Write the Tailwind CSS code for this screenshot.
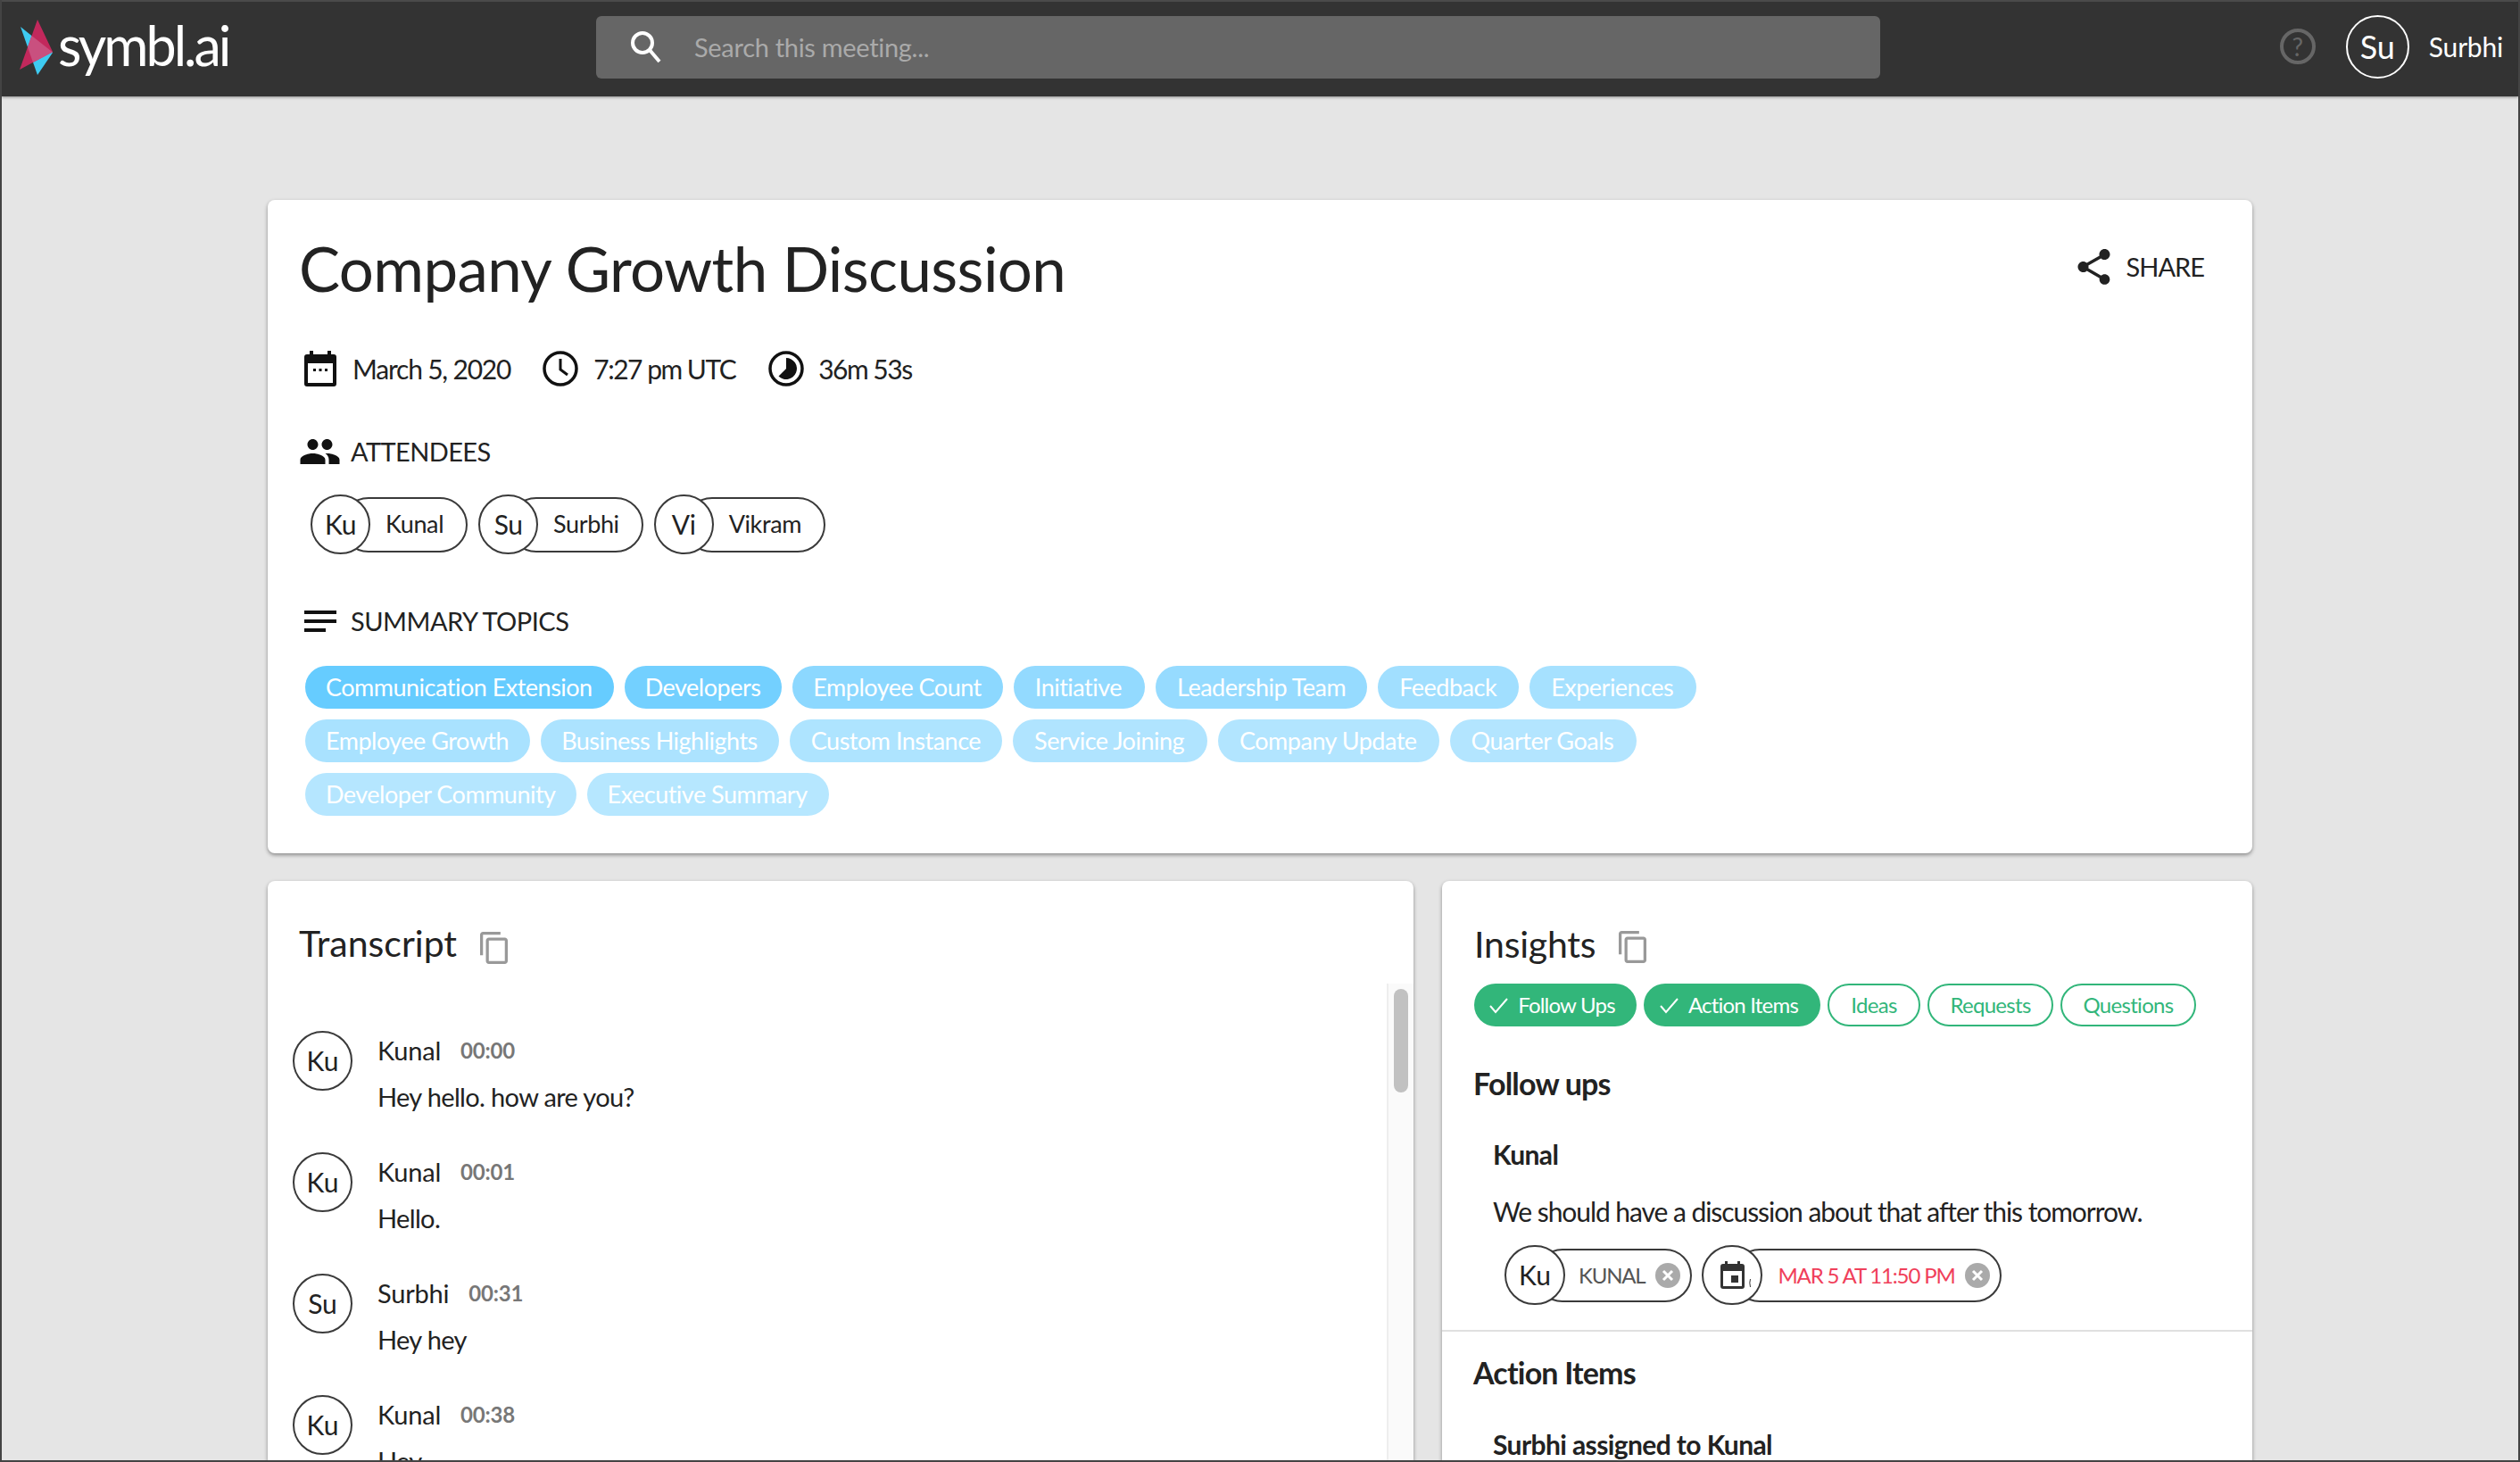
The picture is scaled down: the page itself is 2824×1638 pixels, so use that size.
<!DOCTYPE html>
<html lang="en">
<head>
  <meta charset="UTF-8">
  <title>symbl.ai - Company Growth Discussion</title>
  <script src="https://cdn.jsdelivr.net/npm/@tailwindcss/browser@4"></script>
</head>
<body class="font-[Lato,sans-serif] text-[#222] bg-[#e5e5e5]">
<div class="h-[1638px] w-[2824px] overflow-hidden flex flex-col border-x-2 border-b-2 border-[#444] relative">

  <!-- Header -->
  <header class="h-[108px] shrink-0 bg-[#333] border-t-2 border-[#4a4a4a] pb-[4px] flex items-center text-white shadow-[0_1px_3px_rgba(0,0,0,0.4)] relative z-10">
    <div class="w-[666px] shrink-0 flex items-center">
      <svg class="ml-[18px] mt-[2px] w-[44px] h-[66px]" viewBox="20 20 44 66">
        <polygon points="23,29 59,58 42,83" fill="#3ecbf2"/>
        <polygon points="42,21 59,57 22,77" fill="#c2285c"/>
        <polygon points="35.5,39 59,57.5 37,69 31,52" fill="#c9507f"/>
      </svg>
      <span class="ml-[1px] text-[61px] leading-none tracking-[-3px] -mt-[6px]">symbl.ai</span>
    </div>
    <div class="w-[1439px] h-[70px] bg-[#666] rounded-md flex items-center pl-[36px]">
      <svg class="w-[40px] h-[40px]" viewBox="0 0 40 40" fill="none" stroke="#fff">
        <circle cx="16" cy="15" r="11" stroke-width="4"/>
        <path d="M24 23l11 13" stroke-width="4"/>
      </svg>
      <span class="ml-[34px] text-[29px] tracking-[-0.3px] text-[#aaa]">Search this meeting...</span>
    </div>
    <div class="flex-1 flex items-center justify-end pr-[17px] -mt-[2px]">
      <div class="w-[40px] h-[40px] rounded-full border-[4px] border-[#666] text-[#666] text-[28px] flex items-center justify-center">?</div>
      <div class="ml-[34px] w-[71px] h-[71px] rounded-full border-2 border-white flex items-center justify-center text-[36px]">Su</div>
      <span class="ml-[22px] text-[30px] tracking-[-0.2px]">Surbhi</span>
    </div>
  </header>

  <main class="flex-1 pl-[298px] pt-[116px] min-h-0">
    <!-- Meeting card -->
    <section class="w-[2224px] h-[732px] bg-white rounded-lg shadow-[0_2px_4px_rgba(0,0,0,0.4)] px-[36px] pt-[46px]">
      <div class="h-[60px] flex items-center justify-between">
        <h1 class="-ml-[1px] text-[69px] leading-none font-normal tracking-[-0.6px]">Company Growth Discussion</h1>
        <div class="flex items-center mr-[18px] -mt-[2px]">
          <svg class="w-[37px] h-[40px]" viewBox="3 2 18 20" fill="#222"><path d="M18 16.08c-.76 0-1.44.3-1.96.77L8.91 12.7c.05-.23.09-.46.09-.7s-.04-.47-.09-.7l7.05-4.11c.54.5 1.25.81 2.04.81 1.66 0 3-1.34 3-3s-1.34-3-3-3-3 1.34-3 3c0 .24.04.47.09.7L8.04 9.81C7.5 9.31 6.79 9 6 9c-1.66 0-3 1.34-3 3s1.34 3 3 3c.79 0 1.5-.31 2.04-.81l7.12 4.16c-.05.21-.08.43-.08.65 0 1.61 1.31 2.92 2.92 2.92 1.61 0 2.92-1.31 2.92-2.92s-1.31-2.92-2.92-2.92z"/></svg>
          <span class="ml-[18px] text-[29px] tracking-[-1px]">SHARE</span>
        </div>
      </div>

      <div class="mt-[63px] h-[40px] flex items-center text-[30px] tracking-[-1.2px] pl-[5px]">
        <svg class="w-[36px] h-[40px]" viewBox="0 0 36 40">
          <rect x="6" y="0" width="4" height="8" fill="#111"/><rect x="26" y="0" width="4" height="8" fill="#111"/>
          <rect x="0" y="4" width="36" height="36" rx="3" fill="#111"/>
          <rect x="4" y="14" width="28" height="22" fill="#fff"/>
          <rect x="10" y="20" width="3" height="3" fill="#111"/><rect x="16.5" y="20" width="3" height="3" fill="#111"/><rect x="23" y="20" width="3" height="3" fill="#111"/>
        </svg>
        <span class="ml-[18px]">March 5, 2020</span>
        <svg class="ml-[36px] w-[40px] h-[40px]" viewBox="0 0 40 40" fill="none" stroke="#111">
          <circle cx="20" cy="20" r="18" stroke-width="3.5"/>
          <path d="M20 9v12l8 6" stroke-width="3"/>
        </svg>
        <span class="ml-[17px] tracking-[-1.5px]">7:27 pm UTC</span>
        <svg class="ml-[37px] w-[40px] h-[40px]" viewBox="0 0 40 40">
          <circle cx="20" cy="20" r="18" stroke-width="3.5" stroke="#111" fill="none"/>
          <path d="M20 8A12 12 0 1 1 11.5 28.5L20 20Z" fill="#111"/>
        </svg>
        <span class="ml-[16px] tracking-[-1.5px]">36m 53s</span>
      </div>

      <div class="mt-[58px] h-[30px] flex items-center text-[29px] tracking-[-0.6px]">
        <svg class="w-[45px] h-[28px]" viewBox="1 5 22 14" fill="#111"><path d="M16 11c1.66 0 2.99-1.34 2.99-3S17.66 5 16 5c-1.66 0-3 1.34-3 3s1.34 3 3 3zm-8 0c1.66 0 2.99-1.34 2.99-3S9.66 5 8 5C6.34 5 5 6.34 5 8s1.34 3 3 3zm0 2c-2.33 0-7 1.17-7 3.5V19h14v-2.5c0-2.33-4.67-3.5-7-3.5zm8 0c-.29 0-.62.02-.97.05 1.16.84 1.97 1.97 1.97 3.45V19h6v-2.5c0-2.33-4.67-3.5-7-3.5z"/></svg>
        <span class="ml-[12px]">ATTENDEES</span>
      </div>

      <div class="mt-[33px] flex items-center gap-[12px] pl-[12px] text-[27px] tracking-[-0.4px]">
        <div class="flex items-center">
          <div class="relative z-10 w-[67px] h-[67px] rounded-full border-2 border-[#3a3a3a] bg-white flex items-center justify-center text-[30px]">Ku</div>
          <div class="h-[62px] -ml-[33px] pl-[48px] pr-[25px] rounded-full border-2 border-[#3a3a3a] flex items-center">Kunal</div>
        </div>
        <div class="flex items-center">
          <div class="relative z-10 w-[67px] h-[67px] rounded-full border-2 border-[#3a3a3a] bg-white flex items-center justify-center text-[30px]">Su</div>
          <div class="h-[62px] -ml-[33px] pl-[48px] pr-[25px] rounded-full border-2 border-[#3a3a3a] flex items-center">Surbhi</div>
        </div>
        <div class="flex items-center">
          <div class="relative z-10 w-[67px] h-[67px] rounded-full border-2 border-[#3a3a3a] bg-white flex items-center justify-center text-[30px]">Vi</div>
          <div class="h-[62px] -ml-[33px] pl-[48px] pr-[25px] rounded-full border-2 border-[#3a3a3a] flex items-center">Vikram</div>
        </div>
      </div>

      <div class="mt-[63px] h-[24px] flex items-center text-[29px] tracking-[-0.5px] pl-[5px]">
        <svg class="w-[36px] h-[24px]" viewBox="0 0 36 24" fill="#111"><rect width="36" height="4"/><rect y="10" width="36" height="4"/><rect y="20" width="24" height="4"/></svg>
        <span class="ml-[16px]">SUMMARY TOPICS</span>
      </div>

      <div class="mt-[38px] pl-[6px] flex flex-wrap gap-[12px] w-[1640px] text-[27px] tracking-[-0.5px] text-white">
        <span class="h-[48px] pl-[23px] pr-[24px] rounded-full flex items-center bg-[#66ccff]">Communication Extension</span>
        <span class="h-[48px] pl-[23px] pr-[24px] rounded-full flex items-center bg-[#73d0ff]">Developers</span>
        <span class="h-[48px] pl-[23px] pr-[24px] rounded-full flex items-center bg-[#8cd8ff]">Employee Count</span>
        <span class="h-[48px] pl-[24px] pr-[26px] rounded-full flex items-center bg-[#93daff]">Initiative</span>
        <span class="h-[48px] pl-[24px] pr-[24px] rounded-full flex items-center bg-[#96dbff]">Leadership Team</span>
        <span class="h-[48px] pl-[24px] pr-[25px] rounded-full flex items-center bg-[#a1dfff]">Feedback</span>
        <span class="h-[48px] pl-[24px] pr-[26px] rounded-full flex items-center bg-[#a6e1ff]">Experiences</span>
        <span class="h-[48px] pl-[23px] pr-[24px] rounded-full flex items-center bg-[#a9e2ff]">Employee Growth</span>
        <span class="h-[48px] pl-[23px] pr-[24px] rounded-full flex items-center bg-[#ace3ff]">Business Highlights</span>
        <span class="h-[48px] pl-[24px] pr-[24px] rounded-full flex items-center bg-[#aee4ff]">Custom Instance</span>
        <span class="h-[48px] pl-[24px] pr-[26px] rounded-full flex items-center bg-[#b0e4ff]">Service Joining</span>
        <span class="h-[48px] pl-[24px] pr-[25px] rounded-full flex items-center bg-[#b2e5ff]">Company Update</span>
        <span class="h-[48px] pl-[24px] pr-[26px] rounded-full flex items-center bg-[#b3e5ff]">Quarter Goals</span>
        <span class="h-[48px] pl-[23px] pr-[23px] rounded-full flex items-center bg-[#b5e6ff]">Developer Community</span>
        <span class="h-[48px] pl-[23px] pr-[24px] rounded-full flex items-center bg-[#b6e7ff]">Executive Summary</span>
      </div>
    </section>

    <div class="mt-[31px] flex gap-[32px]">
      <!-- Transcript -->
      <section class="w-[1284px] h-[700px] bg-white rounded-t-lg shadow-[0_2px_4px_rgba(0,0,0,0.4)] relative overflow-hidden">
        <div class="pl-[35px] pt-[46px] h-[115px] flex items-start">
          <h2 class="text-[41px] leading-[48px] font-normal">Transcript</h2>
          <svg class="ml-[26px] mt-[11px] w-[31px] h-[36px]" viewBox="2 1 19 22" fill="#999"><path d="M16 1H4c-1.1 0-2 .9-2 2v14h2V3h12V1zm3 4H8c-1.1 0-2 .9-2 2v14c0 1.1.9 2 2 2h11c1.1 0 2-.9 2-2V7c0-1.1-.9-2-2-2zm0 16H8V7h11v14z"/></svg>
        </div>
        <div class="absolute right-0 top-[115px] bottom-0 w-[30px] bg-[#fafafa] border-l-2 border-[#eee]">
          <div class="ml-[6px] mt-[6px] w-[16px] h-[116px] rounded-full bg-[#c1c1c1]"></div>
        </div>
        <div class="pl-[28px] pt-[53px] flex flex-col gap-[69px]">
          <div class="flex h-[67px]">
            <div class="w-[67px] h-[67px] shrink-0 rounded-full border-2 border-[#3a3a3a] flex items-center justify-center text-[30px]">Ku</div>
            <div class="ml-[28px] pt-[4px]">
              <div class="flex items-center h-[36px] text-[29px] tracking-[-0.2px]">Kunal<span class="ml-[22px] text-[24px] font-bold tracking-[-0.2px] text-[#777]">00:00</span></div>
              <div class="mt-[16px] h-[36px] flex items-center text-[29px] tracking-[-0.65px]">Hey hello. how are you?</div>
            </div>
          </div>
          <div class="flex h-[67px]">
            <div class="w-[67px] h-[67px] shrink-0 rounded-full border-2 border-[#3a3a3a] flex items-center justify-center text-[30px]">Ku</div>
            <div class="ml-[28px] pt-[4px]">
              <div class="flex items-center h-[36px] text-[29px] tracking-[-0.2px]">Kunal<span class="ml-[22px] text-[24px] font-bold tracking-[-0.2px] text-[#777]">00:01</span></div>
              <div class="mt-[16px] h-[36px] flex items-center text-[29px] tracking-[-0.65px]">Hello.</div>
            </div>
          </div>
          <div class="flex h-[67px]">
            <div class="w-[67px] h-[67px] shrink-0 rounded-full border-2 border-[#3a3a3a] flex items-center justify-center text-[30px]">Su</div>
            <div class="ml-[28px] pt-[4px]">
              <div class="flex items-center h-[36px] text-[29px] tracking-[-0.2px]">Surbhi<span class="ml-[22px] text-[24px] font-bold tracking-[-0.2px] text-[#777]">00:31</span></div>
              <div class="mt-[16px] h-[36px] flex items-center text-[29px] tracking-[-0.65px]">Hey hey</div>
            </div>
          </div>
          <div class="flex h-[67px]">
            <div class="w-[67px] h-[67px] shrink-0 rounded-full border-2 border-[#3a3a3a] flex items-center justify-center text-[30px]">Ku</div>
            <div class="ml-[28px] pt-[4px]">
              <div class="flex items-center h-[36px] text-[29px] tracking-[-0.2px]">Kunal<span class="ml-[22px] text-[24px] font-bold tracking-[-0.2px] text-[#777]">00:38</span></div>
              <div class="mt-[16px] h-[36px] flex items-center text-[29px] tracking-[-0.65px]">Hey</div>
            </div>
          </div>
        </div>
      </section>

      <!-- Insights -->
      <section class="w-[908px] h-[700px] bg-white rounded-t-lg shadow-[0_2px_4px_rgba(0,0,0,0.4)] overflow-hidden">
        <div class="pl-[36px] pt-[47px] flex items-start h-[115px]">
          <h2 class="text-[41px] leading-[48px] font-normal tracking-[-0.2px]">Insights</h2>
          <svg class="ml-[26px] mt-[9px] w-[31px] h-[36px]" viewBox="2 1 19 22" fill="#999"><path d="M16 1H4c-1.1 0-2 .9-2 2v14h2V3h12V1zm3 4H8c-1.1 0-2 .9-2 2v14c0 1.1.9 2 2 2h11c1.1 0 2-.9 2-2V7c0-1.1-.9-2-2-2zm0 16H8V7h11v14z"/></svg>
        </div>
        <div class="pl-[36px] flex gap-[8px] text-[24px] tracking-[-0.7px]">
          <span class="h-[48px] w-[182px] pr-[7px] rounded-full bg-[#32b67a] text-white flex items-center justify-center tracking-[-0.8px]">
            <svg class="w-[21px] h-[21px] mr-[11px]" viewBox="0 0 21 21" fill="none" stroke="#fff" stroke-width="2"><path d="M1 11l6 7L20 3"/></svg>Follow Ups</span>
          <span class="h-[48px] w-[198px] pr-[7px] rounded-full bg-[#32b67a] text-white flex items-center justify-center tracking-[-0.8px]">
            <svg class="w-[21px] h-[21px] mr-[11px]" viewBox="0 0 21 21" fill="none" stroke="#fff" stroke-width="2"><path d="M1 11l6 7L20 3"/></svg>Action Items</span>
          <span class="h-[48px] w-[104px] rounded-full border-2 border-[#32b67a] text-[#32b67a] flex items-center justify-center">Ideas</span>
          <span class="h-[48px] w-[141px] rounded-full border-2 border-[#32b67a] text-[#32b67a] flex items-center justify-center">Requests</span>
          <span class="h-[48px] w-[152px] rounded-full border-2 border-[#32b67a] text-[#32b67a] flex items-center justify-center">Questions</span>
        </div>
        <h3 class="mt-[44px] ml-[35px] text-[34px] leading-[40px] font-bold tracking-[-0.8px]">Follow ups</h3>
        <h4 class="mt-[39px] ml-[57px] text-[30px] leading-[40px] font-bold tracking-[-0.6px]">Kunal</h4>
        <p class="mt-[24px] ml-[57px] text-[30px] leading-[40px] tracking-[-1.06px]">We should have a discussion about that after this tomorrow.</p>
        <div class="mt-[18px] ml-[70px] flex items-center gap-[11px]">
          <div class="flex items-center">
            <div class="relative z-10 w-[68px] h-[67px] rounded-full border-2 border-[#3a3a3a] bg-white flex items-center justify-center text-[30px]">Ku</div>
            <div class="h-[60px] -ml-[33px] pl-[46px] pr-[11px] rounded-full border-2 border-[#3a3a3a] flex items-center text-[24px] tracking-[-1.2px] text-[#555]">KUNAL
              <svg class="ml-[12px] w-[28px] h-[28px]" viewBox="0 0 28 28"><circle cx="14" cy="14" r="14" fill="#aaa"/><path d="M9 9l10 10M19 9L9 19" stroke="#fff" stroke-width="3"/></svg>
            </div>
          </div>
          <div class="flex items-center">
            <div class="relative z-10 w-[68px] h-[67px] rounded-full border-2 border-[#3a3a3a] bg-white flex items-center justify-center">
              <svg class="ml-[7px] w-[34px] h-[31px]" viewBox="0 0 34 31">
                <rect x="5" y="0" width="3" height="5" fill="#333"/><rect x="19" y="0" width="3" height="5" fill="#333"/>
                <rect x="0" y="3" width="27" height="28" rx="3" fill="#333"/>
                <rect x="3" y="11" width="21" height="17" fill="#fff"/>
                <rect x="12" y="16" width="8" height="8" fill="#333"/>
                <path d="M33.5 20q-1.4 4 0 9" fill="none" stroke="#333" stroke-width="1"/>
              </svg>
            </div>
            <div class="h-[60px] -ml-[33px] pl-[48px] pr-[11px] rounded-full border-2 border-[#3a3a3a] flex items-center text-[24px] tracking-[-1.15px] text-[#f0405a]">MAR 5 AT 11:50 PM
              <svg class="ml-[11px] w-[28px] h-[28px]" viewBox="0 0 28 28"><circle cx="14" cy="14" r="14" fill="#aaa"/><path d="M9 9l10 10M19 9L9 19" stroke="#fff" stroke-width="3"/></svg>
            </div>
          </div>
        </div>
        <div class="mt-[28px] h-[2px] bg-[#e0e0e0]"></div>
        <h3 class="mt-[26px] ml-[35px] text-[34px] leading-[40px] font-bold tracking-[-0.8px]">Action Items</h3>
        <h4 class="mt-[40px] ml-[57px] text-[30px] leading-[40px] font-bold tracking-[-0.6px]">Surbhi assigned to Kunal</h4>
      </section>
    </div>
  </main>
</div>
</body>
</html>
